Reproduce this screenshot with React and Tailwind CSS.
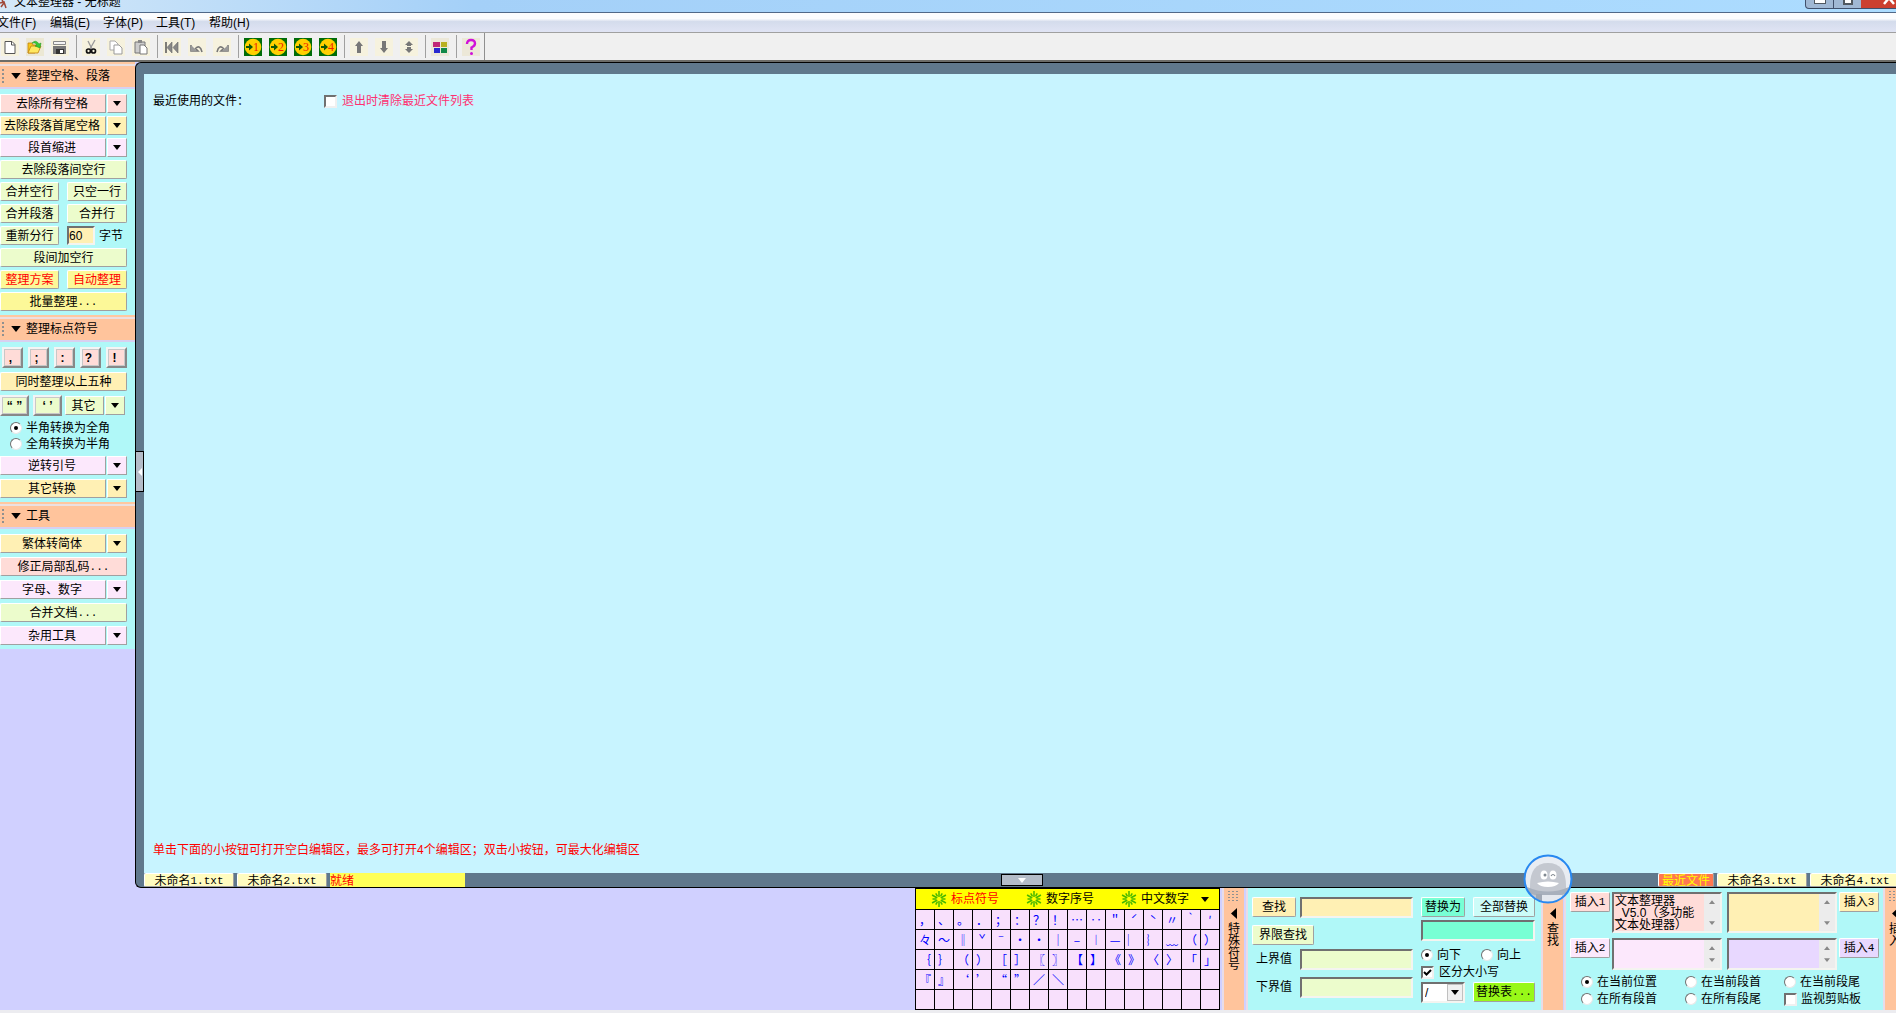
import clsx from "clsx";

const tones = {
    pink: "bg-[#ffdcd8]",
    yellow: "bg-[#fff0b4]",
    lilac: "bg-[#fce8fc]",
    green: "bg-[#ecfccc]",
    lemon: "bg-[#fcf898]",
    violet: "bg-[#e8d8ff]",
    mint: "bg-[#78ffd4]",
    ice: "bg-[#ccfcf8]",
    lime: "bg-[#98f818]",
    cream: "bg-[#fffcc0]",
};

const symbols = [
    "，", "、", "。", "．", "；", "：", "？", "！", "…", "‥", "＂", "ˊ", "ˋ", "〃", "‵", "′",
    "々", "～", "‖", "ˇ", "ˉ", "・", "·", "｜", "–", "︱", "—", "︳", "︴", "﹏", "（", "）",
    "｛", "｝", "（", "）", "［", "］", "〖", "〗", "【", "】", "《", "》", "〈", "〉", "「", "」",
    "『", "』", "‘", "’", "“", "”", "／", "＼",
];

const edge = "border border-t-white border-l-white border-r-[#a0a0a0] border-b-[#a0a0a0]";
const sunken = "border-2 border-t-[#707070] border-l-[#707070] border-r-[#f4f4f0] border-b-[#f4f4f0] outline-none";

function Btn({ tone, className, children }) {
    return (
        <button
            type="button"
            className={clsx("flex h-5 items-center justify-center whitespace-nowrap rounded-xs", edge, tones[tone], className)}
        >
            {children}
        </button>
    );
}

function Mono({ children }) {
    return <span className="font-['Liberation_Mono',monospace] text-[11px]">{children}</span>;
}

function Down({ className }) {
    return (
        <svg viewBox="0 0 8 5" className={clsx("h-[5px] w-2", className)} fill="currentColor" aria-hidden="true">
            <path d="M0 0h8L4 5z" />
        </svg>
    );
}

function SideBtn({ tone, className, children }) {
    return <Btn tone={tone} className={clsx("h-[19px]!", className || "w-full")}>{children}</Btn>;
}

function SplitBtn({ tone, children }) {
    return (
        <div className="flex h-[19px] w-full gap-px">
            <button type="button" className={clsx("flex flex-1 items-center justify-center whitespace-nowrap pr-0.5", edge, tones[tone])}>
                {children}
            </button>
            <button type="button" aria-label="更多" className={clsx("flex w-5 items-center justify-center", edge, tones[tone])}>
                <Down />
            </button>
        </div>
    );
}

function KeyBtn({ tone, className, children }) {
    return (
        <button
            type="button"
            className={clsx(
                "flex h-[21px] items-center justify-center border-2 border-t-[#f4f4f4] border-l-[#f4f4f4] border-r-[#888] border-b-[#888] font-bold",
                "shadow-[inset_0_0_0_1px_#c8c8c8]",
                tones[tone],
                className,
            )}
        >
            {children}
        </button>
    );
}

function Radio({ name, label, checked, className }) {
    return (
        <label className={clsx("flex h-4 items-center whitespace-nowrap", className || "gap-1")}>
            <input
                type="radio"
                name={name}
                defaultChecked={checked}
                className="relative size-3 appearance-none rounded-full border border-t-[#707070] border-l-[#707070] border-r-[#e8e8e8] border-b-[#e8e8e8] bg-white checked:before:absolute checked:before:inset-[3px] checked:before:rounded-full checked:before:bg-black"
            />
            {label}
        </label>
    );
}

function Check({ label, checked, className }) {
    return (
        <label className={clsx("flex h-4 items-center gap-[5px] whitespace-nowrap", className)}>
            <span className="relative flex size-[13px]">
                <input
                    type="checkbox"
                    defaultChecked={checked}
                    className="size-[13px] appearance-none border-2 border-t-[#707070] border-l-[#707070] border-r-[#f0f0f0] border-b-[#f0f0f0] bg-white"
                />
                {checked && (
                    <svg viewBox="0 0 13 13" className="pointer-events-none absolute inset-0 size-[13px]" fill="none" stroke="#000" strokeWidth="2">
                        <path d="M3 6l2.5 2.5L10 4" />
                    </svg>
                )}
            </span>
            {label}
        </label>
    );
}

function Section({ title, children }) {
    return (
        <section className="bg-[#b0f8f8]">
            <div className="border-t-2 border-[#ffc8a0]">
                <h2 className="flex h-[25px] items-center border-y-2 border-t-[#ece0e0] border-b-[#d8d0f0] bg-[#ffc49c] pb-0.5 pl-0.5">
                    <span className="h-3.5 w-0.5 border-l-2 border-dotted border-[#909090]" />
                    <Down className="ml-1.5 h-1.5! w-3!" />
                    <span className="ml-1">{title}</span>
                </h2>
            </div>
            <div className="w-[127px] pt-[5px] pb-1">{children}</div>
        </section>
    );
}

function Sidebar() {
    return (
        <aside className="w-[135px] shrink-0 overflow-hidden bg-[#d0d0ff]">
            <Section title="整理空格、段落">
                <div className="flex flex-col gap-[3px]">
                    <SplitBtn tone="pink">去除所有空格</SplitBtn>
                    <SplitBtn tone="yellow">去除段落首尾空格</SplitBtn>
                    <SplitBtn tone="lilac">段首缩进</SplitBtn>
                    <SideBtn tone="green">去除段落间空行</SideBtn>
                    <div className="flex justify-between">
                        <SideBtn tone="green" className="w-[59px]">合并空行</SideBtn>
                        <SideBtn tone="green" className="w-[60px]">只空一行</SideBtn>
                    </div>
                    <div className="flex justify-between">
                        <SideBtn tone="green" className="w-[59px]">合并段落</SideBtn>
                        <SideBtn tone="green" className="w-[60px]">合并行</SideBtn>
                    </div>
                    <div className="flex justify-between">
                        <SideBtn tone="green" className="w-[59px]">重新分行</SideBtn>
                        <label className="flex h-[19px] w-[60px] items-center gap-1">
                            <input type="text" defaultValue="60" className={clsx("h-[19px] w-7", sunken, tones.yellow)} />
                            字节
                        </label>
                    </div>
                    <SideBtn tone="green">段间加空行</SideBtn>
                    <div className="flex justify-between text-[#f00]">
                        <SideBtn tone="lemon" className="w-[59px]">整理方案</SideBtn>
                        <SideBtn tone="lemon" className="w-[60px]">自动整理</SideBtn>
                    </div>
                    <SideBtn tone="lemon">批量整理<Mono>...</Mono></SideBtn>
                </div>
            </Section>
            <Section title="整理标点符号">
                <div className="flex flex-col gap-1">
                    <div className="flex justify-between pl-0.5">
                        {[",", ";", ":", "?", "!"].map((c) => (
                            <KeyBtn key={c} tone="pink" className="w-[21px] pr-1">{c}</KeyBtn>
                        ))}
                    </div>
                    <SideBtn tone="yellow">同时整理以上五种</SideBtn>
                    <div className="flex items-center">
                        <KeyBtn tone="green" className="w-[29px]">“ ”</KeyBtn>
                        <KeyBtn tone="green" className="ml-1 w-[29px]">‘ ’</KeyBtn>
                        <button type="button" className={clsx("ml-[3px] h-[19px] w-[39px] pr-0.5", edge, tones.green)}>其它</button>
                        <button type="button" aria-label="更多" className={clsx("ml-px flex h-[19px] w-5 items-center justify-center", edge, tones.green)}>
                            <Down />
                        </button>
                    </div>
                    <div className="pl-2.5">
                        <Radio name="width" label="半角转换为全角" checked />
                        <Radio name="width" label="全角转换为半角" />
                    </div>
                    <SplitBtn tone="lilac">逆转引号</SplitBtn>
                    <SplitBtn tone="yellow">其它转换</SplitBtn>
                </div>
            </Section>
            <Section title="工具">
                <div className="flex flex-col gap-1">
                    <SplitBtn tone="yellow">繁体转简体</SplitBtn>
                    <SideBtn tone="pink">修正局部乱码<Mono>...</Mono></SideBtn>
                    <SplitBtn tone="lilac">字母、数字</SplitBtn>
                    <SideBtn tone="green">合并文档<Mono>...</Mono></SideBtn>
                    <SplitBtn tone="lilac">杂用工具</SplitBtn>
                </div>
            </Section>
        </aside>
    );
}

function Tool({ label, className, children }) {
    return (
        <button type="button" aria-label={label} className={clsx("size-[18px]", className || "bg-[#f6f2de]")}>
            <svg viewBox="0 0 18 18" className="size-[18px]">{children}</svg>
        </button>
    );
}

function Sep() {
    return <span className="mr-[5px] ml-[7px] h-[23px] w-px bg-[#a0a0a0]" />;
}

function ToolGroup({ children }) {
    return <div className="flex gap-[7px]">{children}</div>;
}

function Toolbar() {
    return (
        <div className="flex h-[29px] items-center border-b-2 border-[#6c6c68] bg-[#f0f0f0] pl-px">
            <ToolGroup>
                <Tool label="新建">
                    <path d="M4 3.5h7l3 3v9H4z" fill="#fff" stroke="#555" />
                    <path d="M10.5 3.5V7H14" fill="none" stroke="#555" />
                </Tool>
                <Tool label="打开" className="bg-[#ece8d4]">
                    <path d="M2 5h4l1 2h6v3L9 15H2z" fill="#f8c818" stroke="#c08010" strokeWidth=".8" />
                    <path d="M5 8h10l-3 7H2z" fill="#ffe860" stroke="#c08010" strokeWidth=".8" />
                    <path d="M6 5q4-4 7 1l2-1-1 5-5-2 2-1q-2-3-5-2z" fill="#38c838" stroke="#189018" strokeWidth=".5" />
                </Tool>
                <Tool label="保存">
                    <path d="M2.500 3.500h12v3h-12z" fill="#f4f4f4" stroke="#888" />
                    <path d="M2 8h13v8H2z" fill="#777" />
                    <path d="M5 11h8v5H5z" fill="#333" />
                    <path d="M9 12h3v3H9z" fill="#fff" />
                </Tool>
            </ToolGroup>
            <Sep />
            <ToolGroup>
                <Tool label="剪切">
                    <path d="M6 3l4 8M13 2l-5 9" stroke="#999" strokeWidth="1.3" />
                    <circle cx="6.5" cy="13" r="2" fill="none" stroke="#111" strokeWidth="1.7" />
                    <circle cx="11.5" cy="13" r="2" fill="none" stroke="#111" strokeWidth="1.7" />
                </Tool>
                <Tool label="复制">
                    <path d="M3 3h5l3 3v6H3z" fill="#fff" stroke="#aaa" />
                    <path d="M7 7h5l3 3v6H7z" fill="#fff" stroke="#999" />
                </Tool>
                <Tool label="粘贴">
                    <path d="M3 4h10v11H3z" fill="#ccc" stroke="#777" />
                    <path d="M6 2h4v3H6z" fill="#888" />
                    <path d="M8 7h4l3 3v6H8z" fill="#fff" stroke="#777" />
                </Tool>
            </ToolGroup>
            <Sep />
            <ToolGroup>
                <Tool label="全部撤消">
                    <path d="M3 4v11" stroke="#555" strokeWidth="1.5" />
                    <path d="M9 4v11L4 9.500zM15 4v11L10 9.500z" fill="#888" stroke="#666" strokeWidth=".6" />
                </Tool>
                <Tool label="撤消">
                    <path d="M3 7v6h7L7.500 10.500Q12 6 14 14" fill="none" stroke="#777" strokeWidth="1.6" />
                    <path d="M3 7v6h6z" fill="#999" />
                </Tool>
                <Tool label="重做">
                    <path d="M15 7v6H8l2.500-2.500Q6 6 4 14" fill="none" stroke="#777" strokeWidth="1.6" />
                    <path d="M15 7v6H9z" fill="#999" />
                </Tool>
            </ToolGroup>
            <Sep />
            <ToolGroup>
                {[1, 2, 3, 4].map((n) => (
                    <Tool key={n} label={`编辑区${n}`} className="bg-[#006c08]">
                        <circle cx="9" cy="9" r="8.300" fill="#ffd000" />
                        <path d="M2 8h3V5.500L9 9l-4 3.500V10H2z" fill="#105808" />
                        <text x="12" y="13" textAnchor="middle" fontSize="12" fill="#f02000" fontFamily="Liberation Serif">{n}</text>
                    </Tool>
                ))}
            </ToolGroup>
            <Sep />
            <ToolGroup>
                <Tool label="上移"><path d="M9 3l4 5h-2v7H7V8H5z" fill="#777" /></Tool>
                <Tool label="下移"><path d="M9 15l4-5h-2V3H7v7H5z" fill="#777" /></Tool>
                <Tool label="居中"><path d="M9 3l4 4h-2v1H7V7H5zM7 9h4v2h2l-4 4-4-4h2z" fill="#777" /></Tool>
            </ToolGroup>
            <Sep />
            <ToolGroup>
                <Tool label="颜色" className="bg-[#ece8d8]">
                    <path d="M2 4h7v5H2z" fill="#c02878" />
                    <path d="M10 4h6v5h-6z" fill="#b8b020" />
                    <path d="M3 10h6v5H3z" fill="#2828d0" />
                    <path d="M10 10h6v5h-6z" fill="#108848" />
                </Tool>
            </ToolGroup>
            <Sep />
            <ToolGroup>
                <Tool label="帮助" className="bg-[#ece8d8]">
                    <path d="M5 6q0-4 4-4t4 3.500Q13 8 9.500 9.500V12" fill="none" stroke="#d010d8" strokeWidth="2.400" />
                    <circle cx="9.500" cy="15.500" r="1.500" fill="#d010d8" />
                </Tool>
            </ToolGroup>
            <span className="ml-1 h-[27px] w-px bg-[#909090]" />
        </div>
    );
}

function TitleBar() {
    return (
        <header className="flex h-[13px] overflow-hidden border-b border-[#506888] bg-linear-to-r from-[#d4e8f8] via-[#a4d0f8] via-25% to-[#acdcff]">
            <svg viewBox="0 0 8 9" className="h-[9px] w-2" fill="none" stroke="#a04838" strokeWidth="1.5">
                <path d="M0 3l4-1 2 6M2 0l2 3-3 4" />
            </svg>
            <h1 className="-mt-1.5 ml-1.5 leading-4">文本整理器 - 无标题</h1>
            <div className="mr-[-22px] ml-auto flex h-[9px] overflow-hidden rounded-b border border-t-0 border-[#40506c] bg-[#a0b8d4]">
                <button type="button" aria-label="最小化" className="flex w-7 justify-center border-r border-[#40506c]">
                    <span className="h-1 w-3 border border-t-0 border-[#505860] bg-white" />
                </button>
                <button type="button" aria-label="还原" className="flex w-[27px] justify-center">
                    <span className="h-[5px] w-2.5 border-2 border-t-0 border-[#505860] bg-white" />
                </button>
                <button type="button" aria-label="关闭" className="flex w-14 justify-center bg-[#cc4030]">
                    <svg viewBox="0 0 12 5" className="h-[5px] w-3" stroke="#fff" strokeWidth="2.500"><path d="M6-2L1 4M6-2l5 6" /></svg>
                </button>
            </div>
        </header>
    );
}

function MenuBar() {
    return (
        <nav className="flex h-5 items-center border-b border-[#a0a0a0] bg-linear-to-b from-[#fbfcfe] from-30% via-[#d4dcec] via-45% to-[#e0e4f4]">
            {["文件(F)", "编辑(E)", "字体(P)", "工具(T)", "帮助(H)"].map((m, i) => (
                <a key={m} href="#" className={clsx("whitespace-nowrap", i === 0 ? "-ml-[3px] w-[53px]" : "w-[53px]")}>{m}</a>
            ))}
        </nav>
    );
}

function FileTab({ n }) {
    return (
        <Btn tone="cream" className="h-[14px]! w-[90px] shrink-0 pt-0.5">
            未命名<Mono>{n}.txt</Mono>
        </Btn>
    );
}

function Editor() {
    return (
        <main className="flex min-w-0 flex-1 flex-col rounded-l-md border border-r-0 border-black bg-[#60788c] pt-[11px]">
            <div className="flex flex-1">
                <div className="flex w-2 shrink-0 items-center pb-1">
                    <button type="button" aria-label="收起左栏" className="flex h-[41px] w-2 items-center justify-center border border-l-0 border-black bg-[#b4bcc8] text-white">
                        <svg viewBox="0 0 4 8" className="h-2 w-1" fill="currentColor"><path d="M4 0v8L0 4z" /></svg>
                    </button>
                </div>
                <div className="flex flex-1 flex-col justify-between bg-[#c8f4ff] px-[9px] pt-[19px] pb-[15px]">
                    <div className="flex h-4 items-center">
                        <span className="w-[171px]">最近使用的文件：</span>
                        <Check label="退出时清除最近文件列表" className="text-[#ff3070]" />
                    </div>
                    <p className="h-4 leading-4 text-[#f00]">
                        单击下面的小按钮可打开空白编辑区，最多可打开4个编辑区；双击小按钮，可最大化编辑区
                    </p>
                </div>
            </div>
            <div className="flex h-[14px] gap-[3px] overflow-hidden pl-2">
                <div className="flex flex-1 gap-[3px]">
                    <FileTab n={1} />
                    <FileTab n={2} />
                    <p className="w-[135px] bg-[#ffff58] leading-4 text-[#f00]">就绪</p>
                </div>
                <button type="button" aria-label="收起下栏" className="flex h-3 w-[42px] items-center justify-center self-center border border-black bg-[#b4bcc8] text-white">
                    <Down />
                </button>
                <div className="-mr-1 flex flex-1 justify-end gap-[3px]">
                    <Btn className="h-[14px]! w-14 bg-[#ff7850] pt-0.5 text-[#ff0]">最近文件</Btn>
                    <FileTab n={3} />
                    <FileTab n={4} />
                </div>
            </div>
        </main>
    );
}

function Burst() {
    return (
        <svg viewBox="-8 -8 16 16" className="size-4" stroke="#48b800" strokeWidth="1.500">
            {Array.from({ length: 12 }, (_, i) => (
                <path key={i} d={i % 2 ? "M0-3V-6.500" : "M0-2V-8"} transform={`rotate(${i * 30})`} />
            ))}
        </svg>
    );
}

function SymbolPanel() {
    return (
        <div className="w-[305px] shrink-0 border border-t-0 border-black bg-black pt-px">
            <div className="flex h-5 items-center bg-[#ff0] pl-[15px]">
                {["标点符号", "数字序号", "中文数字"].map((name, i) => (
                    <button key={name} type="button" className={clsx("flex w-[95px] shrink-0 items-center gap-1 whitespace-nowrap", i === 0 && "text-[#f00]")}>
                        <Burst />
                        <span>{name}</span>
                        {i === 2 && <Down className="ml-2 shrink-0" />}
                    </button>
                ))}
            </div>
            <div className="mt-px grid grid-cols-16 gap-px font-['Noto_Sans_CJK_SC',sans-serif]">
                {Array.from({ length: 80 }, (_, i) => (
                    <button key={i} type="button" aria-label={symbols[i] || "空"} className="flex h-[19px] items-center justify-center overflow-hidden bg-[#f8e0fc] text-[#00f]">
                        {symbols[i]}
                    </button>
                ))}
            </div>
        </div>
    );
}

function SideBar({ title, className, children }) {
    return (
        <div className={clsx("relative flex shrink-0 border-x-2 border-[#e8dce8]", className)}>
            <button type="button" className="flex w-5 shrink-0 flex-col items-center bg-[#ffc49c] pt-[3px]">
                <svg viewBox="0 0 12 11" className="h-[11px] w-3" stroke="#909090" strokeDasharray="2 2">
                    <path d="M0 .5h12M0 3.500h12M0 6.500h12M0 9.500h12" />
                </svg>
                <svg viewBox="0 0 6 11" className="mt-1.5 h-[11px] w-1.5"><path d="M6 0v11L0 5.500z" /></svg>
                <span className="mt-1 w-3 break-all leading-3">{title}</span>
            </button>
            {children}
        </div>
    );
}

function Mascot() {
    return (
        <svg viewBox="0 0 50 50" className="absolute -top-[34px] -left-5 z-10 size-[50px]">
            <clipPath id="face"><circle cx="25" cy="25" r="23" /></clipPath>
            <circle cx="25" cy="25" r="23" fill="#e8ecf2" />
            <g clipPath="url(#face)">
                <path d="M7 50V32Q7 9 25 9t18 23v18z" fill="#c4c8d0" />
                <path d="M4 33q21 9 42 0v6q-21 7-42 0z" fill="#a8b0bc" />
                <path d="M13 40h6v10h-6z" fill="#a0a8b4" />
                <path d="M19 41h20v9H19z" fill="#e4e8ee" />
                <ellipse cx="21" cy="21" rx="3.500" ry="4.500" fill="#fff" />
                <ellipse cx="30" cy="21" rx="3.500" ry="4.500" fill="#fff" />
                <circle cx="22" cy="21" r="1.500" fill="#808890" />
                <path d="M28 22q2-3 4 0" fill="none" stroke="#808890" strokeWidth="1.200" />
                <path d="M14 29q11-3 22 0-3 4-11 4t-11-4z" fill="#fff" />
            </g>
            <circle cx="25" cy="25" r="23.500" fill="none" stroke="#2888f0" strokeWidth="2" />
        </svg>
    );
}

function FindPanel() {
    return (
        <div className="flex w-[293px] shrink-0 gap-2 bg-[#b0f8f8] pt-[9px] pl-1">
            <div className="w-[161px]">
                <div className="flex h-7 gap-1">
                    <Btn tone="yellow" className="w-11">查找</Btn>
                    <input type="text" aria-label="查找" className={clsx("h-[21px] min-w-0 flex-1", sunken, tones.yellow)} />
                </div>
                <Btn tone="green" className="w-[62px]">界限查找</Btn>
                <label className="mt-1 flex h-7 items-start pl-1">
                    <span className="w-11 leading-[21px]">上界值</span>
                    <input type="text" className={clsx("h-[21px] w-[113px]", sunken, tones.green)} />
                </label>
                <label className="flex h-7 items-start pl-1">
                    <span className="w-11 leading-[21px]">下界值</span>
                    <input type="text" className={clsx("h-[21px] w-[113px]", sunken, tones.green)} />
                </label>
            </div>
            <div className="w-[114px]">
                <div className="flex justify-between">
                    <Btn tone="mint" className="w-11">替换为</Btn>
                    <Btn tone="ice" className="w-[62px]">全部替换</Btn>
                </div>
                <input type="text" aria-label="替换为" className={clsx("mt-[3px] block h-[21px] w-full", sunken, tones.mint)} />
                <div className="mt-1.5 flex gap-5">
                    <Radio name="dir" label="向下" checked className="gap-1" />
                    <Radio name="dir" label="向上" className="gap-1" />
                </div>
                <Check label="区分大小写" checked className="mt-px" />
                <div className="mt-0.5 flex justify-between">
                    <span className="relative flex">
                        <select aria-label="替换项" className={clsx("h-[21px] w-11 appearance-none bg-white pl-0.5", sunken)}>
                            <option>/</option>
                        </select>
                        <span className="pointer-events-none absolute top-0.5 right-0.5 flex h-[17px] w-4 items-center justify-center border border-[#c0c0c0] bg-[#f0f0f0]">
                            <Down />
                        </span>
                    </span>
                    <Btn tone="lime" className="w-[62px]">替换表<Mono>...</Mono></Btn>
                </div>
            </div>
        </div>
    );
}

function Memo({ tone, label, text, className }) {
    return (
        <div className={clsx("flex w-[110px]", sunken, className)}>
            <textarea
                aria-label={label}
                defaultValue={text}
                className={clsx("min-w-0 flex-1 resize-none overflow-hidden pt-px pl-px leading-3 outline-none", tones[tone])}
            />
            <div className="flex w-4 flex-col items-center justify-between bg-[#ececec] py-1.5 text-[#888]">
                <Down className="h-1! w-1.5! rotate-180" />
                <Down className="h-1! w-1.5!" />
            </div>
        </div>
    );
}

function InsertPanel() {
    const radios = ["在当前位置", "在当前段首", "在当前段尾", "在所有段首", "在所有段尾"];
    return (
        <div className="w-[317px] shrink-0 bg-[#b0f8f8] pt-1 pl-1">
            <div className="flex h-[46px] gap-0.5">
                <Btn tone="pink" className="w-10">插入<Mono>1</Mono></Btn>
                <Memo tone="pink" label="插入1" text={"文本整理器\n_V5.0（多功能\n文本处理器）"} className="h-[41px]" />
                <Memo tone="yellow" label="插入3" className="ml-[3px] h-[41px]" />
                <Btn tone="yellow" className="w-10">插入<Mono>3</Mono></Btn>
            </div>
            <div className="flex h-9 gap-0.5">
                <Btn tone="lilac" className="w-10">插入<Mono>2</Mono></Btn>
                <Memo tone="lilac" label="插入2" className="h-8" />
                <Memo tone="violet" label="插入4" className="ml-[3px] h-8" />
                <Btn tone="violet" className="w-10">插入<Mono>4</Mono></Btn>
            </div>
            <div className="grid grid-cols-[104px_99px_1fr] gap-y-px pl-[11px]">
                {radios.map((r, i) => (
                    <Radio key={r} name="place" label={r} checked={i === 0} />
                ))}
                <Check label="监视剪贴板" className="gap-1!" />
            </div>
        </div>
    );
}

export default function App() {
    return (
        <div
            lang="zh-CN"
            className="flex min-h-screen flex-col overflow-hidden bg-[#d0d0ff] font-['Liberation_Sans','Noto_Sans_CJK_SC',sans-serif] text-xs leading-4 text-black"
        >
            <TitleBar />
            <MenuBar />
            <Toolbar />
            <div className="flex flex-1">
                <Sidebar />
                <Editor />
            </div>
            <div className="flex h-[125px] justify-end border-b-3 border-[#ececf0]">
                <SymbolPanel />
                <SideBar title="特殊符号" className="ml-0.5 w-[26px]" />
                <FindPanel />
                <SideBar title="查找" className="w-[25px]">
                    <Mascot />
                </SideBar>
                <InsertPanel />
                <SideBar title="插入" className="w-[13px] overflow-hidden border-r-0" />
            </div>
        </div>
    );
}
